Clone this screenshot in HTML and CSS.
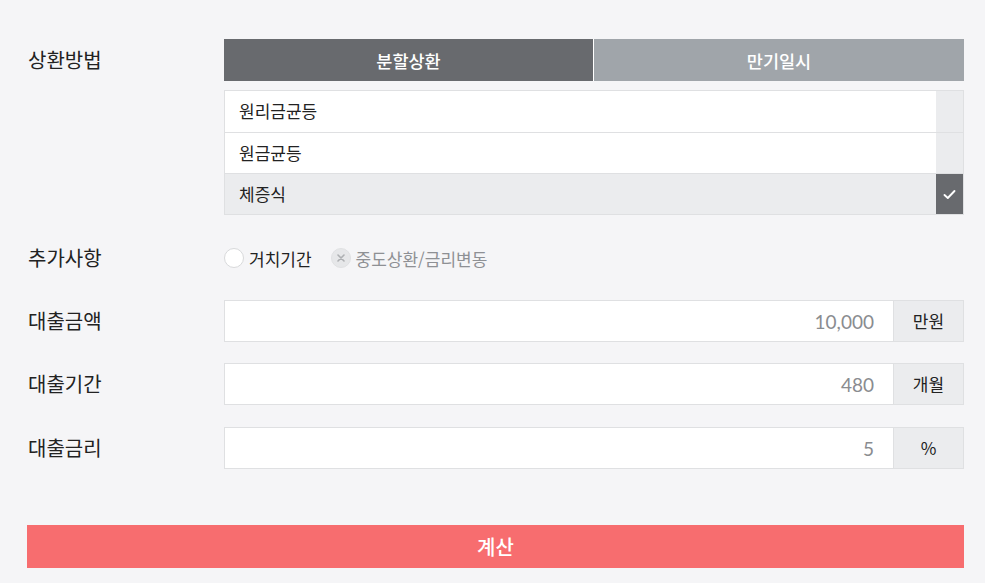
FILE: index.html
```html
<!DOCTYPE html>
<html lang="ko">
<head>
    <meta charset="UTF-8">
    <meta name="viewport" content="width=device-width, initial-scale=1.0">
    <title>대출 계산기</title>
    <link rel="stylesheet" href="styles.css">
</head>
<body>
    <div class="calc">
        <div class="row row-method">
            <div class="label">상환방법</div>
            <div class="field">
                <div class="tabs">
                    <button type="button" class="tab active">분할상환</button>
                    <button type="button" class="tab">만기일시</button>
                </div>
                <ul class="options">
                    <li class="option"><span class="option-name">원리금균등</span><span class="check"></span></li>
                    <li class="option"><span class="option-name">원금균등</span><span class="check"></span></li>
                    <li class="option selected">
                        <span class="option-name">체증식</span>
                        <span class="check">
                            <svg width="13" height="11" viewBox="0 0 13 11"><polyline points="1.5,6 4.8,9 11.5,2" fill="none" stroke="#fff" stroke-width="1.9" stroke-linecap="round" stroke-linejoin="round"/></svg>
                        </span>
                    </li>
                </ul>
            </div>
        </div>

        <div class="row row-extra">
            <div class="label">추가사항</div>
            <div class="field extras">
                <label class="radio"><span class="dot"></span>거치기간</label>
                <label class="radio disabled">
                    <span class="dot">
                        <svg width="8" height="8" viewBox="0 0 8 8"><path d="M1 1L7 7M7 1L1 7" stroke="#aeb0b3" stroke-width="1.6" stroke-linecap="round"/></svg>
                    </span>중도상환/금리변동
                </label>
            </div>
        </div>

        <div class="row row-input">
            <div class="label">대출금액</div>
            <div class="field input-group">
                <input type="text" class="num" value="10,000">
                <span class="unit">만원</span>
            </div>
        </div>

        <div class="row row-input">
            <div class="label">대출기간</div>
            <div class="field input-group">
                <input type="text" class="num" value="480">
                <span class="unit">개월</span>
            </div>
        </div>

        <div class="row row-input row-last">
            <div class="label">대출금리</div>
            <div class="field input-group">
                <input type="text" class="num" value="5">
                <span class="unit">%</span>
            </div>
        </div>

        <button type="button" class="submit">계산</button>
    </div>
</body>
</html>
```

FILE: styles.css
```css
body {
    margin: 0;
    background: #f5f5f7;
    font-family: "Noto Sans CJK KR", "Noto Sans", sans-serif;
    color: #222;
}

.calc {
    width: 937px;
    padding: 39px 0 0 27px;
}

.row {
    display: flex;
}

.label {
    width: 197px;
    flex-shrink: 0;
    font-size: 20px;
    line-height: 42px;
    padding-left: 1px;
    box-sizing: border-box;
}

.field {
    flex: 1;
}

.tabs {
    display: flex;
    height: 42px;
}

.tab {
    flex: 1;
    border: none;
    margin: 0;
    padding: 0;
    font-family: inherit;
    font-size: 17.5px;
    font-weight: 500;
    color: #fff;
    background: #a0a5aa;
}

.tab.active {
    background: #686a6e;
    flex: 0 0 369px;
}

.tab + .tab {
    border-left: 1px solid #fff;
}

.options {
    list-style: none;
    margin: 9px 0 0;
    padding: 0;
    border: 1px solid #dfe0e2;
    background: #fff;
}

.option {
    display: flex;
    height: 41px;
    box-sizing: border-box;
    border-top: 1px solid #dfe0e2;
}

.option:first-child {
    border-top: none;
}

.option-name {
    flex: 1;
    font-size: 17px;
    line-height: 40px;
    padding-left: 14px;
}

.check {
    width: 27px;
    background: #ebecee;
    display: flex;
    align-items: center;
    justify-content: center;
}

.option.selected {
    background: #ebecee;
}

.option.selected .check {
    background: #686a6e;
}

.row-extra {
    margin-top: 22px;
}

.extras {
    display: flex;
    align-items: center;
    gap: 19px;
}

.radio {
    display: flex;
    align-items: center;
    font-size: 17px;
    color: #222;
}

.radio .dot {
    width: 20px;
    height: 20px;
    box-sizing: border-box;
    border: 1px solid #d8d9db;
    border-radius: 50%;
    background: #fff;
    margin-right: 5px;
    display: flex;
    align-items: center;
    justify-content: center;
}

.radio.disabled {
    color: #8e9094;
}

.radio.disabled .dot {
    background: #e6e7e9;
    border-color: #e0e1e3;
}

.row-input {
    margin-top: 21px;
}

.row-last {
    margin-top: 22px;
}

.input-group {
    display: flex;
    height: 42px;
}

.num {
    flex: 1;
    min-width: 0;
    margin: 0;
    box-sizing: border-box;
    border: 1px solid #dfe0e2;
    border-right: none;
    background: #fff;
    text-align: right;
    padding: 0 19px 0 10px;
    font-family: Lato, "Noto Sans", sans-serif;
    font-size: 19px;
    color: #8a8c90;
    outline: none;
}

.unit {
    width: 71px;
    box-sizing: border-box;
    border: 1px solid #dfe0e2;
    background: #ebecee;
    text-align: center;
    line-height: 40px;
    font-size: 17px;
}

.submit {
    display: block;
    width: 937px;
    height: 43px;
    margin-top: 56px;
    border: none;
    background: #f76d6f;
    color: #fff;
    font-family: inherit;
    font-size: 20px;
    font-weight: 500;
}
```
